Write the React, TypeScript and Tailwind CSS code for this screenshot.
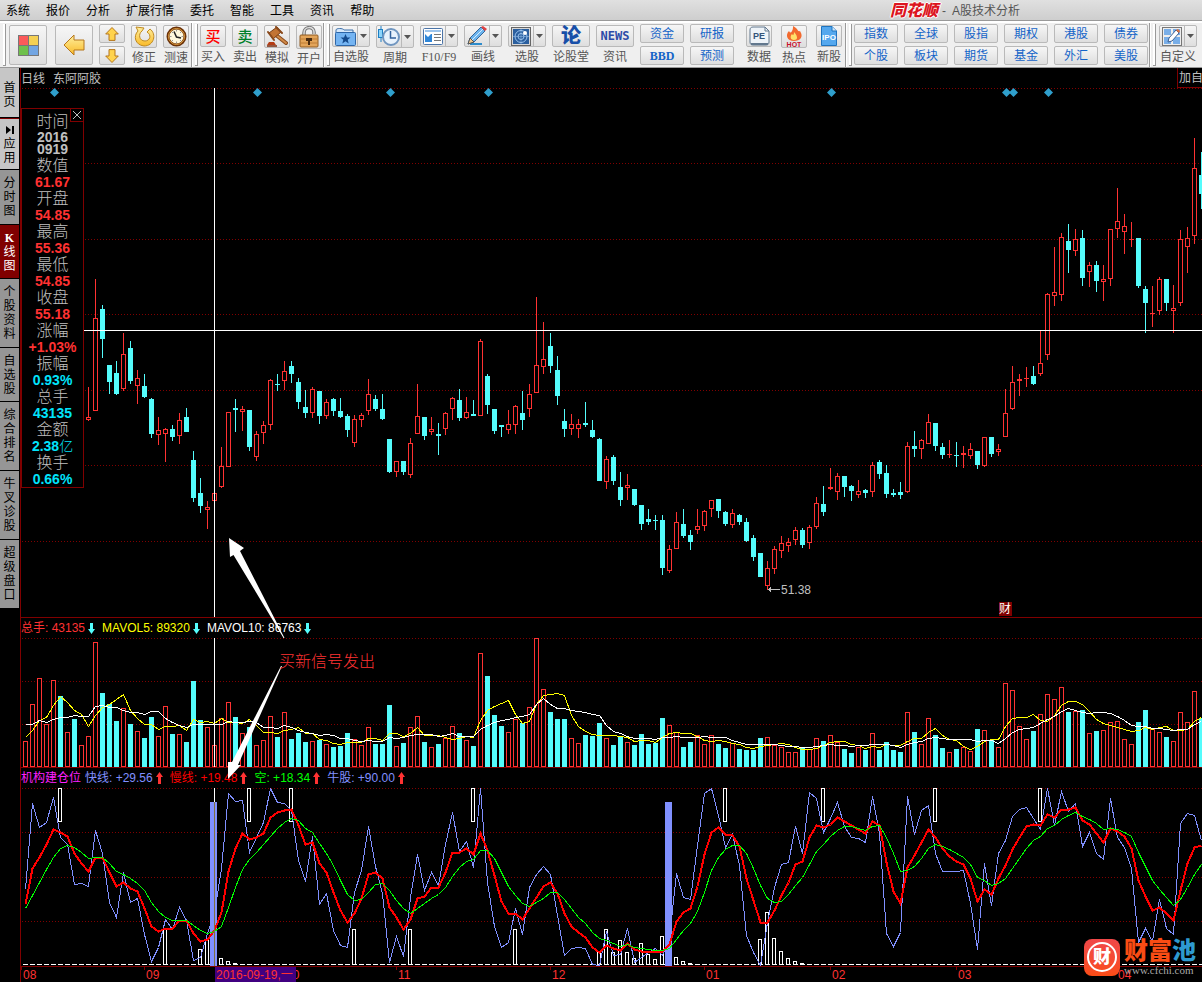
import React from 'react';

const UP = '#ff3232';
const DOWN = '#54fcfc';
const GRID = '#800000';
const STEP = 7;
const FIRST_X = 25;
const FIRST_CANDLE = 9;
const CURSOR_X = 214;

// high, body top, body bottom, low, rising
type Candle = [number, number, number, number, 0 | 1];

const candles: Candle[] = [
  [387, 417, 420, 421, 1], [279, 318, 411, 411, 1], [305, 309, 339, 358, 0], [365, 365, 382, 394, 0],
  [361, 373, 394, 395, 0], [333, 354, 389, 391, 1], [341, 348, 381, 384, 0], [370, 378, 386, 404, 1],
  [374, 386, 397, 398, 0], [398, 399, 434, 438, 0], [417, 430, 435, 445, 1], [428, 429, 434, 462, 1],
  [425, 429, 437, 441, 0], [413, 420, 436, 444, 1], [408, 417, 432, 432, 0], [451, 460, 498, 502, 0],
  [478, 493, 506, 513, 0], [501, 507, 510, 529, 1], [488, 493, 501, 501, 1], [447, 466, 487, 488, 1],
  [412, 412, 467, 467, 1], [399, 408, 410, 432, 0], [406, 409, 412, 431, 1], [410, 410, 447, 451, 0],
  [431, 434, 457, 461, 1], [421, 425, 433, 444, 1], [379, 380, 425, 430, 1], [374, 384, 385, 391, 0],
  [361, 371, 381, 390, 1], [361, 366, 374, 383, 0], [378, 382, 402, 409, 0], [390, 407, 413, 418, 0],
  [387, 389, 413, 418, 1], [391, 391, 416, 424, 0], [399, 402, 416, 419, 1], [398, 399, 411, 416, 0],
  [398, 411, 417, 418, 0], [414, 416, 430, 437, 0], [415, 419, 443, 447, 1], [413, 415, 420, 427, 1],
  [379, 394, 411, 415, 1], [395, 399, 409, 411, 0], [394, 409, 419, 420, 0], [439, 439, 472, 473, 0],
  [461, 461, 472, 477, 1], [461, 461, 472, 475, 0], [438, 443, 475, 478, 1], [384, 416, 434, 434, 1],
  [417, 417, 436, 440, 0], [417, 429, 432, 435, 1], [423, 434, 436, 455, 0], [412, 413, 429, 435, 1],
  [397, 398, 409, 420, 1], [389, 400, 418, 421, 0], [397, 412, 418, 419, 1], [400, 414, 416, 416, 0],
  [339, 341, 416, 416, 1], [374, 376, 405, 414, 0], [409, 409, 431, 434, 0], [425, 425, 427, 437, 0],
  [410, 424, 430, 434, 1], [405, 406, 425, 434, 1], [391, 413, 420, 430, 0], [384, 394, 409, 417, 1],
  [297, 365, 393, 393, 1], [322, 359, 367, 374, 1], [333, 346, 366, 373, 0], [356, 370, 396, 405, 0],
  [409, 421, 429, 437, 0], [414, 424, 429, 435, 1], [419, 424, 429, 438, 1], [402, 423, 425, 427, 0],
  [420, 430, 437, 438, 0], [438, 439, 481, 481, 0], [456, 459, 482, 489, 1], [455, 457, 481, 485, 0],
  [472, 487, 500, 506, 0], [474, 485, 488, 500, 1], [489, 489, 505, 506, 0], [505, 505, 524, 530, 0],
  [509, 519, 522, 525, 0], [515, 520, 521, 530, 0], [515, 520, 568, 575, 0], [545, 549, 571, 573, 1],
  [512, 522, 549, 549, 1], [509, 524, 536, 538, 0], [530, 535, 542, 550, 0], [509, 526, 530, 534, 1],
  [510, 511, 526, 531, 1], [500, 500, 509, 517, 1], [499, 499, 511, 518, 0], [511, 512, 524, 526, 0],
  [509, 513, 525, 528, 1], [514, 515, 522, 525, 0], [518, 522, 541, 542, 0], [535, 538, 557, 561, 0],
  [553, 553, 577, 577, 0], [561, 568, 586, 590, 1], [546, 549, 569, 574, 1], [536, 543, 551, 558, 1],
  [538, 542, 546, 552, 1], [527, 530, 540, 545, 1], [528, 530, 545, 548, 0], [525, 527, 543, 549, 1],
  [497, 503, 527, 529, 1], [486, 504, 512, 516, 0], [468, 487, 489, 490, 1], [473, 476, 492, 500, 1],
  [476, 476, 487, 497, 0], [485, 486, 491, 501, 0], [480, 491, 495, 498, 1], [489, 490, 493, 498, 0],
  [462, 465, 492, 497, 1], [460, 462, 474, 479, 0], [465, 473, 494, 498, 0], [489, 493, 495, 497, 0],
  [482, 492, 495, 499, 0], [442, 446, 492, 493, 1], [431, 446, 449, 457, 0], [439, 440, 449, 459, 1],
  [414, 422, 444, 444, 1], [423, 423, 446, 451, 0], [443, 447, 455, 459, 0], [440, 454, 455, 458, 1],
  [442, 455, 456, 467, 0], [446, 453, 455, 468, 1], [443, 449, 456, 459, 1], [451, 451, 465, 469, 0],
  [437, 437, 466, 467, 1], [437, 437, 454, 457, 0], [444, 449, 452, 456, 1], [389, 413, 437, 437, 1],
  [366, 382, 409, 410, 1], [374, 379, 381, 396, 1], [367, 378, 379, 387, 1], [366, 376, 384, 385, 0],
  [331, 363, 374, 376, 1], [293, 294, 355, 360, 1], [247, 292, 296, 306, 1], [233, 237, 295, 301, 1],
  [224, 241, 250, 273, 0], [229, 239, 251, 256, 1], [230, 238, 278, 286, 0], [262, 265, 272, 287, 1],
  [261, 265, 281, 292, 0], [265, 279, 282, 301, 1], [229, 229, 279, 286, 1], [188, 221, 229, 238, 1],
  [214, 226, 232, 254, 1], [222, 239, 240, 247, 1], [238, 238, 286, 288, 0], [286, 289, 303, 333, 0],
  [286, 313, 314, 327, 1], [277, 279, 311, 315, 1], [279, 279, 303, 311, 0], [285, 308, 311, 333, 1],
  [230, 239, 303, 306, 1], [227, 238, 247, 273, 1], [138, 168, 236, 244, 1], [152, 175, 194, 209, 0],
];

const volumes = [
  741, 704, 678, 724, 680, 696, 732, 719, 745, 736, 642, 693, 704, 721, 708, 724, 731, 738, 717, 736,
  706, 734, 734, 742, 681, 720, 727, 745, 718, 702, 717, 733, 727, 745, 740, 716, 737, 712, 739, 733,
  742, 741, 740, 744, 747, 746, 733, 739, 745, 727, 744, 744, 705, 746, 743, 727, 716, 742, 747, 744,
  738, 726, 733, 740, 746, 653, 676, 715, 726, 732, 719, 723, 707, 638, 689, 712, 719, 719, 738, 743,
  735, 736, 723, 738, 745, 736, 742, 745, 734, 744, 743, 718, 725, 732, 747, 742, 735, 744, 735, 744,
  748, 743, 749, 750, 750, 738, 737, 745, 747, 752, 752, 747, 749, 738, 741, 735, 742, 749, 753, 747,
  750, 733, 750, 742, 750, 752, 712, 732, 744, 718, 735, 748, 752, 749, 747, 751, 729, 730, 740, 747,
  683, 690, 726, 739, 731, 714, 694, 699, 687, 712, 711, 710, 733, 731, 730, 722, 721, 739, 744, 722,
  710, 729, 732, 737, 741, 712, 722, 691, 718,
];
const headRising = [1, 1, 1, 1, 1, 0, 1, 0, 1];
const ma5Head = [737, 730, 720, 717];
const ma10Head = [724, 724, 720, 722, 719, 717, 717, 715, 716];

const fast = [
  889, 803, 827, 822, 797, 837, 844, 884, 883, 886, 830, 853, 902, 917, 872, 902, 898, 934, 961, 947,
  919, 929, 907, 920, 960, 957, 933, 913, 868, 793, 801, 800, 852, 837, 822, 788, 802, 803, 810, 860,
  881, 836, 904, 893, 930, 945, 947, 892, 870, 826, 866, 893, 962, 936, 956, 897, 854, 890, 872, 885,
  844, 812, 851, 841, 867, 788, 882, 926, 947, 942, 908, 934, 887, 874, 866, 874, 915, 955, 948, 947,
  948, 964, 965, 931, 955, 954, 928, 962, 957, 952, 948, 955, 937, 873, 897, 899, 845, 793, 788, 815,
  847, 834, 865, 935, 952, 965, 922, 887, 864, 862, 826, 853, 792, 798, 832, 818, 802, 826, 837, 838,
  842, 796, 833, 933, 946, 932, 796, 834, 810, 805, 853, 871, 871, 871, 870, 903, 949, 863, 905, 853,
  840, 816, 809, 807, 818, 829, 788, 825, 791, 811, 803, 846, 832, 853, 859, 798, 837, 847, 868, 942,
  928, 941, 899, 928, 934, 823, 813, 815, 840,
];
const slow = [
  904, 868, 857, 844, 829, 832, 836, 853, 863, 871, 857, 857, 872, 886, 882, 888, 891, 908, 926, 931,
  928, 928, 920, 920, 933, 941, 939, 930, 912, 871, 848, 833, 839, 837, 833, 817, 812, 810, 809, 825,
  844, 842, 863, 872, 892, 910, 922, 913, 898, 874, 872, 878, 907, 917, 929, 919, 898, 896, 887, 887,
  872, 852, 852, 848, 854, 833, 850, 875, 901, 913, 913, 919, 908, 897, 886, 882, 893, 913, 926, 932,
  937, 947, 952, 945, 948, 950, 943, 949, 951, 951, 951, 951, 944, 921, 912, 908, 886, 854, 832, 827,
  834, 835, 846, 878, 900, 922, 922, 910, 895, 882, 864, 861, 837, 825, 827, 824, 817, 821, 825, 829,
  833, 821, 825, 862, 891, 903, 867, 855, 842, 829, 837, 848, 856, 861, 864, 878, 901, 889, 894, 878,
  865, 849, 837, 826, 824, 825, 814, 817, 809, 809, 807, 820, 824, 833, 842, 828, 831, 836, 848, 880,
  896, 910, 907, 913, 920, 890, 863, 847, 845,
];
const empty = [
  908, 895, 882, 869, 857, 848, 845, 847, 852, 858, 857, 857, 863, 871, 874, 878, 883, 890, 902, 911,
  917, 920, 920, 920, 925, 930, 933, 931, 926, 907, 887, 869, 859, 852, 844, 836, 828, 822, 818, 820,
  828, 832, 843, 853, 865, 880, 894, 900, 899, 892, 884, 883, 890, 900, 908, 913, 908, 903, 898, 894,
  887, 876, 867, 861, 859, 850, 850, 858, 872, 886, 895, 903, 906, 902, 898, 892, 892, 899, 908, 917,
  923, 932, 938, 940, 943, 946, 944, 947, 948, 949, 950, 950, 948, 939, 930, 923, 911, 892, 870, 857,
  849, 845, 845, 853, 868, 885, 898, 902, 901, 894, 885, 877, 864, 851, 844, 836, 830, 826, 826, 828,
  830, 826, 825, 837, 853, 871, 870, 866, 858, 848, 844, 846, 849, 853, 857, 864, 877, 880, 885, 883,
  878, 868, 858, 848, 840, 836, 828, 825, 819, 815, 812, 816, 819, 823, 829, 828, 829, 832, 836, 852,
  866, 880, 889, 897, 905, 899, 887, 874, 864,
];

const topSignals = [5, 32, 38, 64, 100, 114, 130, 145];
const bottomSignals: [number, number][] = [
  [20, 929], [25, 949], [26, 939], [28, 958], [29, 961], [30, 963], [47, 929], [55, 929], [70, 929],
  [82, 952], [83, 929], [84, 952], [85, 940], [86, 952], [87, 958], [88, 943], [89, 954], [90, 959],
  [91, 936], [93, 957], [94, 961], [95, 963], [105, 939], [106, 912], [107, 938], [108, 951],
  [109, 958], [110, 961], [111, 963],
];
const months: [string, number][] = [
  ['08', 21], ['09', 144], ['10', 284], ['11', 396], ['12', 550], ['01', 704], ['02', 830], ['03', 956], ['04', 1116],
];

const xAt = (i: number) => FIRST_X + i * STEP;
const toPoints = (ys: number[]) => ys.map((y, i) => `${xAt(i) + 0.5},${y + 0.5}`).join(' ');

function average(span: number, head: number[]): number[] {
  return volumes.map((_, i) => {
    if (i < span - 1) return head[i];
    const part = volumes.slice(i - span + 1, i + 1);
    return Math.round(part.reduce((a, b) => a + b, 0) / span);
  });
}

const GridLine = ({ y }: { y: number }) => (
  <line x1={22} x2={4000} y1={y + 0.5} y2={y + 0.5} stroke={GRID} strokeDasharray="1 2" />
);

const PriceChart = () => (
  <svg className="block h-[529px] w-full" shapeRendering="crispEdges" role="img" aria-label="日线">
    <g transform="translate(-21 -88)">
      {[88, 163, 239, 314, 390, 465, 541].map((y) => <GridLine key={y} y={y} />)}
      {candles.map(([high, top, bottom, low, up], i) => {
        const x = xAt(i + FIRST_CANDLE);
        const color = up ? UP : DOWN;
        return (
          <g key={i}>
            <rect x={x} y={high} width={1} height={low - high} fill={color} />
            <rect x={x - 2} y={top} width={5} height={bottom - top} fill={color} />
            {up && bottom - top > 2 ? <rect x={x - 1} y={top + 1} width={3} height={bottom - top - 2} fill="#000" /> : null}
          </g>
        );
      })}
      {[54, 257, 390, 488, 831, 1006, 1013, 1048].map((x) => (
        <path key={x} d={`M${x + 0.5} 88L${x + 5} 92.5L${x + 0.5} 97L${x - 4} 92.5Z`} fill="#2f9fcc" shapeRendering="auto" />
      ))}
      <path d="M20 330.5H4000" stroke="#fff" />
      <path d={`M${CURSOR_X + 0.5} 88V617`} stroke="#fff" />
      <path d="M768 589.5H780M770.5 587V592M769.5 588V591" stroke="#c0c0c0" />
      <text x={781} y={594} fill="#c0c0c0" fontSize={12}>51.38</text>
      <rect x={999} y={602} width={13} height={14} fill="#800000" />
      <text x={999} y={613} fill="#fff" fontSize={12}>财</text>
    </g>
  </svg>
);

const VolumeChart = () => (
  <svg className="block h-[129px] w-full" shapeRendering="crispEdges" role="img" aria-label="总手">
    <g transform="translate(-21 -638)">
      {[638, 681, 724].map((y) => <GridLine key={y} y={y} />)}
      {volumes.map((y, i) => {
        const up = i < FIRST_CANDLE ? headRising[i] : candles[i - FIRST_CANDLE][4];
        return (
          <g key={i}>
            <rect x={xAt(i) - 2} y={y} width={5} height={767 - y} fill={up ? UP : DOWN} />
            {up ? <rect x={xAt(i) - 1} y={y + 1} width={3} height={765 - y} fill="#000" /> : null}
          </g>
        );
      })}
      <polyline points={toPoints(average(5, ma5Head))} fill="none" stroke="#ffff00" />
      <polyline points={toPoints(average(10, ma10Head))} fill="none" stroke="#fff" />
      <path d={`M${CURSOR_X + 0.5} 638V767`} stroke="#fff" />
    </g>
  </svg>
);

const IndicatorChart = () => (
  <svg className="block h-[194px] w-full" shapeRendering="crispEdges" role="img" aria-label="机构建仓位">
    <g transform="translate(-21 -788)">
      {[788, 832, 877, 921].map((y) => <GridLine key={y} y={y} />)}
      <path d="M23 964.5H4000" stroke="#fff" strokeDasharray="5 2" />
      {topSignals.map((i) => (
        <rect key={i} x={xAt(i) - 1.5} y={788.5} width={3} height={33} fill="#000" stroke="#fff" />
      ))}
      {bottomSignals.map(([i, y]) => (
        <rect key={i} x={xAt(i) - 1.5} y={y + 0.5} width={3} height={964 - y} fill="#000" stroke="#fff" />
      ))}
      <polyline points={toPoints(fast)} fill="none" stroke="#8090ff" />
      <rect x={210} y={802} width={7} height={164} fill="#8090ff" />
      <rect x={665} y={802} width={7} height={164} fill="#8090ff" />
      <polyline points={toPoints(slow)} fill="none" stroke="#ff0000" strokeWidth={2} />
      <polyline points={toPoints(empty)} fill="none" stroke="#00ff00" />
      <path d={`M${CURSOR_X + 0.5} 788V802`} stroke="#fff" />
      <path d={`M${CURSOR_X + 0.5} 802V966`} stroke="#807040" />
      <path d="M21 966.5H4000" stroke={GRID} />
      {months.map(([label, x]) => (
        <g key={label}>
          <path d={`M${x + 0.5} 966V970`} stroke={GRID} />
          <text x={x + 2} y={979} fill={UP} fontSize={12}>{label}</text>
        </g>
      ))}
      <rect x={215} y={967} width={81} height={15} fill="#400080" />
      <text x={216} y={979} fill={UP} fontSize={12}>2016-09-19,一</text>
    </g>
  </svg>
);

const Arrow = ({ up = false }: { up?: boolean }) => (
  <svg width={7} height={12} viewBox="0 0 7 12" className="ml-[3px] shrink-0" aria-hidden="true">
    {up ? (
      <path d="M3.5 0L7 5H5V12H2V5H0Z" fill={UP} />
    ) : (
      <path d="M3.5 12L7 7H5V1H2V7H0Z" fill={DOWN} />
    )}
  </svg>
);

interface LegendItem {
  text: string;
  color: string;
  up?: boolean;
}

const Legend = ({ name, items }: { name?: string; items: LegendItem[] }) => (
  <div className="flex h-[21px] items-center gap-[7px] border-t border-[#800000] text-xs whitespace-nowrap">
    {items.map((item, i) => (
      <span key={item.text} className={`flex items-center ${item.color}`}>
        {i === 0 && name ? <span className="mr-1 text-[#ff20ff]">{name}</span> : null}
        {item.text}
        <Arrow up={item.up} />
      </span>
    ))}
  </div>
);

const details: [string, string, string][] = [
  ['数值', '61.67', 'text-[#ff3232]'],
  ['开盘', '54.85', 'text-[#ff3232]'],
  ['最高', '55.36', 'text-[#ff3232]'],
  ['最低', '54.85', 'text-[#ff3232]'],
  ['收盘', '55.18', 'text-[#ff3232]'],
  ['涨幅', '+1.03%', 'text-[#ff3232]'],
  ['振幅', '0.93%', 'text-[#00e4fc]'],
  ['总手', '43135', 'text-[#00e4fc]'],
  ['金额', '2.38亿', 'text-[#00e4fc]'],
  ['换手', '0.66%', 'text-[#00e4fc]'],
];

const DetailPanel = () => (
  <div className="absolute top-10 left-0 w-[63px] border border-[#800000] bg-black pt-1 text-center text-sm font-bold">
    <button type="button" aria-label="关闭" className="absolute top-0 right-0 h-[13px] w-[13px] border-b border-l border-[#800000]">
      <svg width={12} height={12} viewBox="0 0 12 12"><path d="M2 2L10 10M10 2L2 10" stroke="#c0c0c0" /></svg>
    </button>
    <div className="text-base leading-[17px] font-light text-[#c0c0c0]">时间</div>
    <div className="mt-px leading-3 text-[#c0c0c0]">2016</div>
    <div className="mb-0.5 leading-3 text-[#c0c0c0]">0919</div>
    {details.map(([label, value, color]) => (
      <React.Fragment key={label}>
        <div className="text-base leading-[17px] font-light text-[#c0c0c0]">{label}</div>
        <div className={`leading-4 ${color}`}>
          {value.endsWith('亿') ? <>{value.slice(0, -1)}<span className="font-light">亿</span></> : value}
        </div>
      </React.Fragment>
    ))}
  </div>
);

const sideTabs: [string, string][] = [
  ['首页', 'h-[50px] bg-[#c6c6c6] pt-1'],
  ['应用', 'h-[52px] bg-[#c6c6c6] border-t border-t-[#800000]'],
  ['分时图', 'h-[55px] bg-[#969696]'],
  ['K线图', 'h-[54px] bg-[#800000] text-white'],
  ['个股资料', 'h-[69px] bg-[#969696]'],
  ['自选股', 'h-[54px] bg-[#969696]'],
  ['综合排名', 'h-[69px] bg-[#969696]'],
  ['牛叉诊股', 'h-[69px] bg-[#969696]'],
  ['超级盘口', 'h-[69px] bg-[#969696]'],
];

const SideTabs = () => (
  <aside className="flex w-5 shrink-0 flex-col pr-px">
    {sideTabs.map(([label, style]) => (
      <button key={label} type="button" className={`flex flex-col items-center justify-center border-b border-b-black text-xs leading-[14px] ${style}`}>
        {label === '应用' ? (
          <svg width={8} height={14} viewBox="0 0 8 14"><path d="M0 3L5 7L0 11ZM6 3H8V11H6Z" /></svg>
        ) : null}
        {label.split('').map((c) => (
          <span key={c} className={c === 'K' ? "font-['Liberation_Serif',serif] font-bold" : ''}>{c}</span>
        ))}
      </button>
    ))}
  </aside>
);

const boxStyle = 'border border-[#b9b9b9] rounded-xs bg-linear-to-b from-[#f6f6f6] to-[#dedede]';

const Caret = () => (
  <svg width={7} height={4} viewBox="0 0 7 4"><path d="M0 0H7L3.5 4Z" fill="#555" /></svg>
);

interface ToolProps {
  label: string;
  wide?: boolean;
  menu?: boolean;
  children: React.ReactNode;
}

const Tool = ({ label, wide, menu, children }: ToolProps) => (
  <button type="button" className={`flex shrink-0 flex-col items-center pt-0.5 ${wide || menu ? 'w-[38px]' : 'w-[26px]'}`}>
    <span className={`flex h-[25px] w-full ${boxStyle}`}>
      <span className="flex flex-1 items-center justify-center">{children}</span>
      {menu ? <span className="flex w-3 items-center justify-center border-l border-[#b9b9b9]"><Caret /></span> : null}
    </span>
    <span className="font-['Liberation_Serif','Noto_Sans_CJK_SC',sans-serif] text-xs leading-5 whitespace-nowrap text-[#555]">{label}</span>
  </button>
);

const Chips = ({ top, bottom }: { top: string; bottom: string }) => (
  <div className="flex w-11 shrink-0 flex-col gap-[3px] pt-px text-xs text-[#1464c8]">
    <button type="button" className={`h-[19px] pt-px leading-4 ${boxStyle}`}>{top}</button>
    <button type="button" className={`h-[19px] pt-px leading-4 ${boxStyle} ${bottom === 'BBD' ? "font-['Liberation_Serif',serif] font-bold" : ''}`}>{bottom}</button>
  </div>
);

const Grip = () => <span className="mt-px h-[42px] w-[3px] shrink-0 border-r border-b border-[#999] bg-white" />;
const Divider = () => <span className="h-[45px] w-0.5 shrink-0 border-r border-white bg-[#999]" />;

const VArrow = ({ flip = false }: { flip?: boolean }) => (
  <svg width={14} height={14} viewBox="0 0 14 14">
    <path d={flip ? 'M7 13.5L.7 7H4V.6H10V7H13.3Z' : 'M7 .5L13.3 7H10V13.4H4V7H.7Z'} fill="#ffd34d" stroke="#b5761c" />
  </svg>
);

const Toolbar = () => (
  <div className="flex h-[47px] overflow-hidden border-t-2 border-b border-t-white border-b-[#999] bg-[#efefef] pl-[3px]">
    <Grip />
    <div className="ml-[3px] flex gap-1.5">
      <button type="button" aria-label="首页" className={`mt-0.5 flex h-10 w-[38px] items-center justify-center ${boxStyle}`}>
        <svg width={21} height={21} viewBox="0 0 21 21">
          <path d="M0 0H21V21H0Z" fill="#777" />
          <path d="M1 1H10V10H1Z" fill="#fb5a5a" />
          <path d="M11 1H20V10H11Z" fill="#f5d052" />
          <path d="M1 11H10V20H1Z" fill="#6fc04c" />
          <path d="M11 11H20V20H11Z" fill="#72a5e2" />
        </svg>
      </button>
      <button type="button" aria-label="返回" className={`mt-0.5 ml-0.5 flex h-10 w-[38px] items-center justify-center ${boxStyle}`}>
        <svg width={22} height={22} viewBox="0 0 22 22">
          <defs>
            <linearGradient id="gold" x2="0" y2="1"><stop stopColor="#fff0a0" /><stop offset="1" stopColor="#f9ba28" /></linearGradient>
          </defs>
          <path d="M1 11L11 1V6H21V16H11V21Z" fill="url(#gold)" stroke="#b5761c" strokeLinejoin="round" />
        </svg>
      </button>
      <div className="flex w-[26px] flex-col gap-[3px] pt-px">
        <button type="button" aria-label="上一个" className={`flex h-[19px] items-center justify-center ${boxStyle}`}><VArrow /></button>
        <button type="button" aria-label="下一个" className={`flex h-[19px] items-center justify-center ${boxStyle}`}><VArrow flip /></button>
      </div>
      <Tool label="修正">
        <svg width={21} height={21} viewBox="0 0 21 21">
          <path d="M2 1L10 2L8 5C4 8 5 15 11 15C16 15 18 9 13 6L16 3C23 8 20 20 10 20C1 19 -1 10 4 5Z" fill="url(#gold)" stroke="#c08a20" strokeLinejoin="round" />
        </svg>
      </Tool>
      <Tool label="测速">
        <svg width={21} height={21} viewBox="0 0 21 21">
          <circle cx={10.5} cy={10.5} r={8.5} fill="#fff8dd" stroke="#6b3208" strokeWidth={3} />
          <circle cx={10.5} cy={10.5} r={8} fill="none" stroke="#e0a040" />
          <path d="M10.5 4V5.5M10.5 15.5V17M4 10.5H5.5M15.5 10.5H17M6 6L7 7M15 6L14 7M6 15L7 14M15 15L14 14" stroke="#999" />
          <path d="M8 5.5L10.5 11L15 12" fill="none" stroke="#222" strokeWidth={1.5} />
        </svg>
      </Tool>
    </div>
    <span className="w-0.5 shrink-0" />
    <Divider />
    <span className="w-0.5 shrink-0" />
    <Grip />
    <div className="ml-0.5 flex gap-1.5">
      <Tool label="买入"><span className="text-[15px] leading-none font-medium text-[#f00]">买</span></Tool>
      <Tool label="卖出"><span className="text-[15px] leading-none font-medium text-[#00802a]">卖</span></Tool>
      <Tool label="模拟">
        <svg width={22} height={21} viewBox="0 0 22 21">
          <path d="M10 9L20 17" stroke="#8a4a1c" strokeWidth={4} strokeLinecap="round" />
          <path d="M10 9L20 17" stroke="#d08a48" strokeWidth={2} strokeLinecap="round" />
          <path d="M3 7L11 1L15 6L7 13Z" fill="#c27434" stroke="#7a3e14" strokeLinejoin="round" />
          <path d="M2 6L8 14M10 1L16 7" stroke="#8a4a1c" strokeWidth={2} strokeLinecap="round" />
          <path d="M3 16H8L10 19H1Z" fill="#b43c14" />
          <path d="M1 20H11" stroke="#7a2a0c" strokeWidth={1.5} />
        </svg>
      </Tool>
      <Tool label="开户">
        <svg width={20} height={22} viewBox="0 0 20 22">
          <path d="M5 10V7C5 0 15 0 15 6V8" fill="none" stroke="#777" strokeWidth={3.5} />
          <path d="M5 10V7C5 0 15 0 15 6V8" fill="none" stroke="#ddd" strokeWidth={1.5} />
          <rect x={1} y={9} width={18} height={12} rx={1} fill="#e3a55a" stroke="#8f5a20" />
          <path d="M1.5 13H18.5M1.5 17H18.5" stroke="#bd7c34" />
          <path d="M7 12H13V15H11V19H9V15H7Z" fill="#4a2c10" />
        </svg>
      </Tool>
    </div>
    <span className="w-px shrink-0" />
    <Divider />
    <span className="w-0.5 shrink-0" />
    <Grip />
    <div className="ml-0.5 flex gap-1.5">
      <Tool label="自选股" menu>
        <svg width={21} height={19} viewBox="0 0 21 19">
          <path d="M1 3C1 1 8 1 9 3H18V6H1Z" fill="#d6e8fa" stroke="#3b6ea8" />
          <rect x={0.5} y={5.5} width={20} height={13} rx={1} fill="#74b4f2" stroke="#2d66a8" />
          <path d="M10.5 7L12 10.5H15.5L12.7 12.7L13.7 16.5L10.5 14.2L7.3 16.5L8.3 12.7L5.5 10.5H9Z" fill="#144a8c" />
        </svg>
      </Tool>
      <Tool label="周期" menu>
        <svg width={22} height={21} viewBox="0 0 22 21">
          <path d="M3 0V16" stroke="#1c7fc4" />
          <rect x={0.5} y={3.5} width={4} height={8} fill="#8dd4fa" stroke="#1c7fc4" />
          <circle cx={13} cy={11} r={8} fill="#e8f2fc" stroke="#7096c0" strokeWidth={2} />
          <path d="M12.5 5V12H18" fill="none" stroke="#33629c" strokeWidth={1.5} />
        </svg>
      </Tool>
      <Tool label="F10/F9" menu>
        <svg width={20} height={17} viewBox="0 0 20 17">
          <rect x={0.5} y={0.5} width={19} height={16} rx={1} fill="#fff" stroke="#4a74a8" />
          <path d="M2 2H18V4H2Z" fill="#9cc4ec" />
          <path d="M2 6L5 9L8 6H9V14H2Z" fill="#2f86d8" />
          <path d="M11 6.5H18M11 9.5H18M11 12.5H18" stroke="#777" />
        </svg>
      </Tool>
      <Tool label="画线" menu>
        <svg width={21} height={20} viewBox="0 0 21 20">
          <path d="M3 18H15" stroke="#2d8ccc" strokeWidth={2} />
          <path d="M1 18L3 12L14 1L18 5L7 16Z" fill="#6cb4ee" stroke="#33679c" />
          <path d="M1 18L3 12L7 16Z" fill="#f0c890" stroke="#555" />
          <path d="M14 1L18 5L20 3L16 0Z" fill="#e04040" />
          <path d="M5 14L16 3" stroke="#d6ecfc" />
        </svg>
      </Tool>
      <Tool label="选股" menu>
        <svg width={20} height={19} viewBox="0 0 20 19">
          <rect x={0.5} y={0.5} width={19} height={18} fill="#d6d6d6" stroke="#666" />
          <path d="M2 2H18V17H2Z" fill="#2b5f9e" />
          <g fill="none" stroke="#9cc4ee">
            <circle cx={10} cy={9.5} r={6} />
            <circle cx={10} cy={9.5} r={3} />
            <path d="M10 2V17M2 9.5H18" opacity={0.5} />
          </g>
          <circle cx={14} cy={6} r={2} fill="#fff" />
        </svg>
      </Tool>
      <Tool label="论股堂" wide><span className="text-[20px] leading-none font-black text-[#174fa8]">论</span></Tool>
      <Tool label="资讯" wide><span className="font-['DejaVu_Sans_Mono',monospace] text-xs leading-none font-bold text-[#2c4ba8]">NEWS</span></Tool>
      <Chips top="资金" bottom="BBD" />
      <Chips top="研报" bottom="预测" />
    </div>
    <div className="ml-3 flex gap-[9px]">
      <Tool label="数据">
        <svg width={21} height={20} viewBox="0 0 21 20">
          <path d="M1 4C1 2 2 1 4 1H16L20 5V16C20 18 19 19 17 19H4C2 19 1 18 1 16Z" fill="#eef3f8" stroke="#62788e" />
          <path d="M2 18H19" stroke="#62788e" strokeWidth={2} />
          <path d="M16 1V5H20" fill="none" stroke="#62788e" />
          <text x={10} y={13} textAnchor="middle" fontSize={9} fontWeight="bold" fill="#33557a">PE</text>
        </svg>
      </Tool>
      <Tool label="热点">
        <svg width={20} height={21} viewBox="0 0 20 21">
          <path d="M9 0C15 3 13 6 16 5C20 11 16 15 10 15C3 15 1 9 5 5C6 7 7 7 8 5C9 3 9 2 9 0Z" fill="#f26a2e" />
          <path d="M10 6C13 9 15 14 10 14C6 14 6 10 8 8C9 10 10 9 10 6Z" fill="#ffe06a" />
          <text x={10} y={20.5} textAnchor="middle" fontSize={7} fontWeight="bold" fill="#c8102c">HOT</text>
        </svg>
      </Tool>
      <Tool label="新股">
        <svg width={16} height={20} viewBox="0 0 16 20">
          <path d="M.5 .5H11L15.5 5V19.5H.5Z" fill="#55a8ee" stroke="#1f74bf" />
          <path d="M11 .5V5H15.5" fill="#cfe6fa" stroke="#1f74bf" />
          <text x={8} y={14} textAnchor="middle" fontSize={8} fontWeight="bold" fill="#fff">IPO</text>
        </svg>
      </Tool>
    </div>
    <span className="w-[3px] shrink-0" />
    <Divider />
    <span className="w-0.5 shrink-0" />
    <Grip />
    <div className="ml-0.5 flex gap-1.5">
      <Chips top="指数" bottom="个股" />
      <Chips top="全球" bottom="板块" />
      <Chips top="股指" bottom="期货" />
      <Chips top="期权" bottom="基金" />
      <Chips top="港股" bottom="外汇" />
      <Chips top="债券" bottom="美股" />
    </div>
    <span className="w-px shrink-0" />
    <Divider />
    <span className="w-0.5 shrink-0" />
    <Grip />
    <div className="ml-[3px] flex">
      <Tool label="自定义" menu>
        <svg width={20} height={19} viewBox="0 0 20 19">
          <rect x={0.5} y={0.5} width={19} height={18} fill="#eee" stroke="#777" />
          <path d="M2 2H9V8H2ZM11 2H18V8H11ZM2 10H9V17H2ZM11 10H18V17H11Z" fill="#78aee8" />
          <path d="M6 15L7 11L14 3L17 6L10 14Z" fill="#fff" stroke="#3a5f94" />
          <path d="M14 3L17 6L18 4L16 2Z" fill="#e07038" />
        </svg>
      </Tool>
    </div>
  </div>
);

const menus = ['系统', '报价', '分析', '扩展行情', '委托', '智能', '工具', '资讯', '帮助'];

const Watermark = () => (
  <div className="absolute right-1.5 bottom-1.5 flex items-center gap-1">
    <span className="flex h-[37px] w-9 items-center justify-center rounded-lg bg-linear-to-b from-[#f04848] to-[#fa4c14]">
      <span className="flex h-[30px] w-[30px] items-center justify-center rounded-full border-2 border-white text-lg leading-none font-black text-white">财</span>
    </span>
    <span className="flex flex-col">
      <span className="text-2xl leading-[26px] font-black text-[#fa4c14]">财富<span className="text-[#2e9ad0]">池</span></span>
      <span className="font-['Liberation_Serif',serif] text-[11px] leading-3 text-[#aaa]">www.cfchi.com</span>
    </span>
  </div>
);

const App: React.FC = () => (
  <div className="flex min-h-screen flex-col overflow-hidden bg-black font-['Liberation_Sans','Noto_Sans_CJK_SC',sans-serif]">
    <header>
      <div className="flex h-[21px] items-center border-b border-[#999] bg-linear-to-b from-[#e0e0e0] to-[#cecece] pt-px pl-1.5 text-xs">
        <nav className="flex gap-4">
          {menus.map((m) => <button key={m} type="button">{m}</button>)}
        </nav>
        <div className="mr-[182px] ml-auto flex items-center text-[#555]">
          <span className="text-base leading-none font-black text-[#dc1420] italic [text-shadow:1px_0_#fff,-1px_0_#fff,0_1px_#fff,0_-1px_#fff]">同花顺</span>
          <h1 className="ml-1 whitespace-pre">-  A股技术分析</h1>
        </div>
      </div>
      <Toolbar />
    </header>
    <main className="flex">
      <SideTabs />
      <section className="relative min-w-0 flex-1 border-l border-[#800000]">
        <div className="flex h-5 items-start justify-between text-xs text-[#c0c0c0]">
          <h2 className="flex gap-2 leading-[22px]"><span>日线</span><span>东阿阿胶</span></h2>
          <button type="button" className="h-5 w-[25px] overflow-hidden border-b border-l border-[#800000] pl-px text-left leading-5 whitespace-nowrap">加自选</button>
        </div>
        <PriceChart />
        <Legend
          items={[
            { text: '总手: 43135', color: 'text-[#ff3232]' },
            { text: 'MAVOL5: 89320', color: 'text-[#ffff00]' },
            { text: 'MAVOL10: 86763', color: 'text-white' },
          ]}
        />
        <VolumeChart />
        <Legend
          name="机构建仓位"
          items={[
            { text: '快线: +29.56', color: 'text-[#8090ff]', up: true },
            { text: '慢线: +19.48', color: 'text-[#ff0000]', up: true },
            { text: '空: +18.34', color: 'text-[#00ff00]', up: true },
            { text: '牛股: +90.00', color: 'text-[#8090ff]', up: true },
          ]}
        />
        <IndicatorChart />
        <DetailPanel />
        <svg className="pointer-events-none absolute top-0 left-0 h-full w-full" aria-hidden="true">
          <g transform="translate(-21 -68)" fill="#fff">
            <path d="M229 538L244 548L240 551L284.5 638L283.5 638L233.5 555L230 557Z" />
            <path d="M282 666L281 666L232 762L228 762L228 779L241 765L238 765Z" />
          </g>
        </svg>
        <p className="absolute top-[582px] left-[258px] text-base leading-6 font-light text-[#ff3232]">买新信号发出</p>
        <Watermark />
      </section>
    </main>
  </div>
);

export default App;
